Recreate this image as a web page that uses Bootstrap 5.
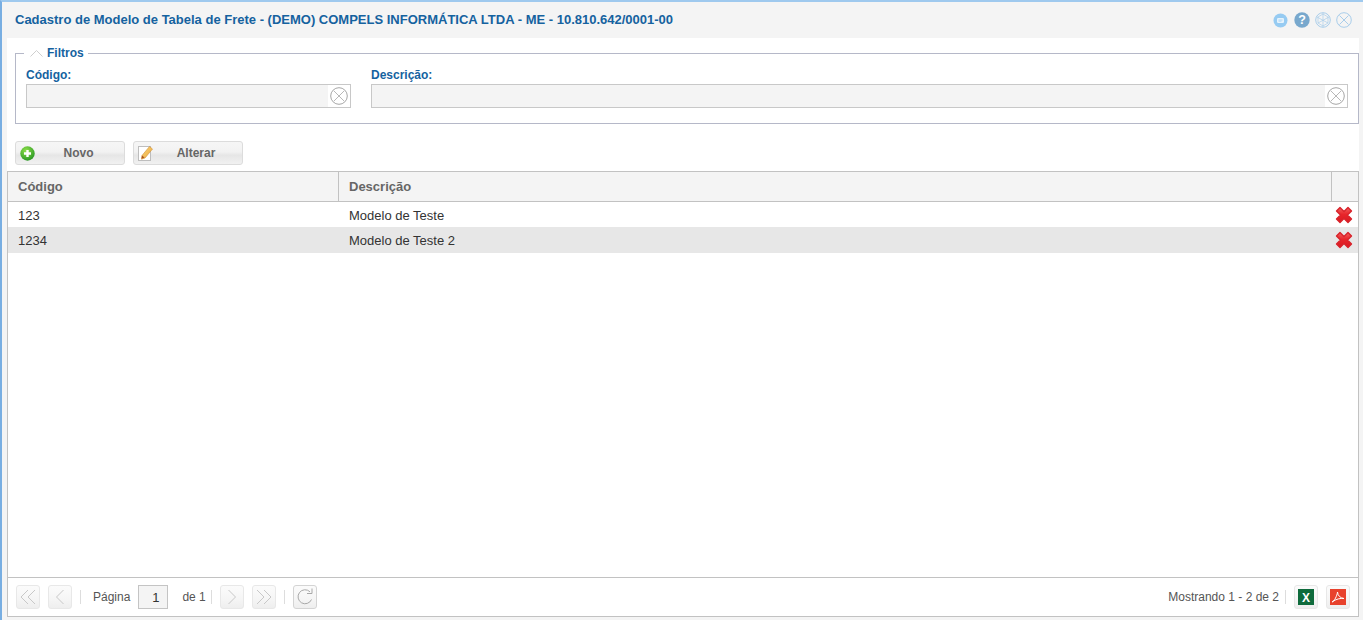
<!DOCTYPE html>
<html lang="pt-BR">
<head>
<meta charset="utf-8">
<title>Cadastro de Modelo de Tabela de Frete</title>
<link href="https://cdn.jsdelivr.net/npm/bootstrap@5.3.0/dist/css/bootstrap.min.css" rel="stylesheet">
<style>
html,body{height:100%;overflow:hidden}
body{font-family:"Liberation Sans",Arial,sans-serif;font-size:12px;color:#333;background:#f4f4f4}
.win{height:620px;background:#f4f4f4;border-top:2px solid #9fc9ee;border-left:2px solid #78aee2}
.win-head{height:36px;padding:0 11px 0 13px}
.win-title{font-size:13px;font-weight:700;color:#15629f;line-height:36px;margin:0;letter-spacing:0}
.win-body{margin-left:5px;margin-right:4px;background:#fff;height:579px}
.filter-box{margin:15px 0 0 8px;border:1px solid #b5b8c8;height:71px;padding:0 10px;position:relative}
.filter-leg{position:absolute;left:8px;top:-8px;background:#fff;padding:0 4px 0 6px;height:14px;line-height:14px;color:#15629f;font-weight:700;gap:4px}
.filter-row{padding-top:14px;gap:20px}
.f-cod{width:325px}
.f-desc{flex:1}
.f-lab{color:#15629f;font-weight:700;line-height:14px;height:16px}
.f-inp{height:24px;border:1px solid #c8c8c8;background:#f4f4f4}
.f-clear{width:22px;background:#fff;justify-content:center}
.tool-row{padding:17px 0 6px 8px;gap:8px}
.tool-btn{width:110px;height:24px;border:1px solid #dcdcdc;border-radius:3px;background:linear-gradient(#f6f6f6 0,#f2f2f2 45%,#e6e6e6 60%,#f1f1f1 100%);padding:0 0 0 4px;color:#666;font-weight:700;font-size:12px}
.tool-btn span{flex:1;text-align:center;padding-right:2px}
.tool-btn.alt span{padding-right:4px}
.grid-wrap{border:1px solid #c2c2c2;border-bottom:0;height:406px;background:#fff;overflow:hidden}
.grid-wrap table{table-layout:fixed;width:100%;margin:0;font-size:13px;color:#333;border-collapse:separate;border-spacing:0}
.grid-wrap th{height:30px;padding:0 10px;background:#f4f4f4;color:#666;font-weight:700;font-size:13px;border-bottom:1px solid #c2c2c2;border-right:1px solid #c2c2c2;vertical-align:middle;line-height:1}
.grid-wrap th:last-child{border-right:0}
.grid-wrap td{height:25px;padding:1px 10px 0;border:0;vertical-align:middle;line-height:1;background:transparent;box-shadow:none;color:#333}
.grid-wrap tr.sel td{background:#e7e7e7;height:26px;padding-bottom:1px}
.grid-wrap td.del{padding:0 5px 0 0;text-align:right}
.col-a{width:331px}.col-c{width:26px}
.pager{border:1px solid #c2c2c2;height:40px;background:#fff;padding:0 8px;color:#555}
.pg-btn{width:24px;height:24px;border:1px solid #e8e8e8;border-radius:3px;background:linear-gradient(#fbfbfb,#f6f6f6 55%,#eee);justify-content:center}
.pg-sep{width:1px;height:14px;background:#ddd}
.pg-inp{width:30px;height:24px;border:1px solid #c4c4c4;background:#f4f4f4;text-align:right;padding:2px 8px 0 0;font-size:13px;line-height:20px;color:#333}
.pg-de{margin-left:14px;margin-right:5px}
.pg-refresh{border-color:#d4d4d4}
.pg-total{margin-right:6px}
.head-icons{gap:5px}
.head-first{margin-right:1px}
svg{display:block}
</style>
</head>
<body>
<svg width="0" height="0" class="position-absolute"><defs>
<linearGradient id="rd" x1="0" y1="0" x2="0" y2="1"><stop offset="0" stop-color="#f0625f"/><stop offset=".45" stop-color="#e8262b"/><stop offset="1" stop-color="#d91a22"/></linearGradient>
<radialGradient id="gr" cx=".4" cy=".3" r=".8"><stop offset="0" stop-color="#8fe04a"/><stop offset="1" stop-color="#1d8f20"/></radialGradient>
<linearGradient id="pc" x1="0" y1="0" x2="1" y2="1"><stop offset="0" stop-color="#f8d777"/><stop offset="1" stop-color="#eda63c"/></linearGradient>
</defs></svg>
<div class="win">
  <div class="win-head d-flex align-items-center justify-content-between">
    <h1 class="win-title">Cadastro de Modelo de Tabela de Frete - (DEMO) COMPELS INFORMÁTICA LTDA - ME - 10.810.642/0001-00</h1>
    <div class="head-icons d-flex align-items-center">
      <svg class="head-first" width="15" height="15" viewBox="0 0 15 15"><circle cx="7.5" cy="7.5" r="7" fill="#96cbf2"/><rect x="4" y="5" width="7" height="5" rx="1.2" fill="#e6f3fc"/><path d="M5.500 7h4M5.500 8.200h3" stroke="#96cbf2" stroke-width=".6"/></svg>
      <svg width="16" height="16" viewBox="0 0 16 16"><circle cx="8" cy="8" r="7.700" fill="#78a8cd"/><text x="8" y="12.400" text-anchor="middle" font-family="Liberation Sans" font-weight="700" font-size="12.500" fill="#fff">?</text></svg>
      <svg width="16" height="16" viewBox="0 0 16 16" fill="none" stroke="#a9cdea"><circle cx="8" cy="8" r="7.300"/><path d="M8 1v14M2 5l11 6M14 5 3 11M8 2 3 5v6l5 3 5-3V5z" stroke-width=".7"/></svg>
      <svg width="16" height="16" viewBox="0 0 16 16" fill="none" stroke="#a9cdea"><circle cx="8" cy="8" r="7.300"/><path d="m3.500 3.500 9 9m0-9-9 9"/></svg>
    </div>
  </div>
  <div class="win-body d-flex flex-column">
    <div class="filter-box">
      <div class="filter-leg d-flex align-items-center">
        <svg width="13" height="7" viewBox="0 0 13 7" fill="none" stroke="#cfcfcf"><path d="m.5 6.500 6-6 6 6"/></svg>
        <span>Filtros</span>
      </div>
      <div class="filter-row d-flex">
        <div class="f-cod">
          <div class="f-lab">Código:</div>
          <div class="f-inp d-flex justify-content-end">
            <div class="f-clear d-flex align-items-center"><svg width="18" height="18" viewBox="0 0 18 18" fill="none" stroke="#a6a6a6"><circle cx="9" cy="9" r="8.300"/><path d="m4 4 10 10m0-10L4 14" stroke-width=".8"/></svg></div>
          </div>
        </div>
        <div class="f-desc">
          <div class="f-lab">Descrição:</div>
          <div class="f-inp d-flex justify-content-end">
            <div class="f-clear d-flex align-items-center"><svg width="18" height="18" viewBox="0 0 18 18" fill="none" stroke="#a6a6a6"><circle cx="9" cy="9" r="8.300"/><path d="m4 4 10 10m0-10L4 14" stroke-width=".8"/></svg></div>
          </div>
        </div>
      </div>
    </div>
    <div class="tool-row d-flex">
      <button type="button" class="tool-btn d-flex align-items-center">
        <svg width="15" height="15" viewBox="0 0 15 15"><circle cx="7.500" cy="7.500" r="7.200" fill="url(#gr)"/><path d="M7.500 4v7M4 7.500h7" stroke="#fff" stroke-width="2.400"/></svg>
        <span>Novo</span>
      </button>
      <button type="button" class="tool-btn alt d-flex align-items-center">
        <svg width="16" height="18" viewBox="0 0 16 18"><rect x=".5" y="2.500" width="12" height="14" fill="#fff" stroke="#bdbdbd"/><path d="m4 11.500 7.500-9 3 2.500-7.500 9-3.500 1.200z" fill="url(#pc)" stroke="#d0913a" stroke-width=".6"/><path d="m4 11.500-.5 3.200 3-1.200z" fill="#a9521f"/></svg>
        <span>Alterar</span>
      </button>
    </div>
    <div class="grid-wrap">
      <table class="table">
        <colgroup><col class="col-a"><col><col class="col-c"></colgroup>
        <thead><tr><th>Código</th><th>Descrição</th><th></th></tr></thead>
        <tbody>
          <tr><td>123</td><td>Modelo de Teste</td><td class="del"><svg class="ms-auto" width="18" height="18" viewBox="0 0 18 18"><path d="M1.500 5 5 1.500 9 5.500 13 1.500 16.500 5 12.500 9 16.500 13 13 16.500 9 12.500 5 16.500 1.500 13 5.500 9z" fill="url(#rd)" stroke="#d8222a" stroke-width="1.400" stroke-linejoin="round"/></svg></td></tr>
          <tr class="sel"><td>1234</td><td>Modelo de Teste 2</td><td class="del"><svg class="ms-auto" width="18" height="18" viewBox="0 0 18 18"><path d="M1.500 5 5 1.500 9 5.500 13 1.500 16.500 5 12.500 9 16.500 13 13 16.500 9 12.500 5 16.500 1.500 13 5.500 9z" fill="url(#rd)" stroke="#d8222a" stroke-width="1.400" stroke-linejoin="round"/></svg></td></tr>
        </tbody>
      </table>
    </div>
    <div class="pager d-flex align-items-center">
      <div class="pg-btn d-flex align-items-center"><svg width="16" height="16" viewBox="0 0 16 16" fill="none" stroke="#c8c8c8"><path d="M8 1 1 8l7 7M15 1 8 8l7 7"/></svg></div>
      <div class="pg-btn d-flex align-items-center ms-2"><svg width="10" height="16" viewBox="0 0 10 16" fill="none" stroke="#c8c8c8"><path d="M8.500 1 1.500 8l7 7"/></svg></div>
      <div class="pg-sep ms-2"></div>
      <span class="ms-2 ps-1">Página</span>
      <div class="pg-inp ms-2">1</div>
      <span class="pg-de">de 1</span>
      <div class="pg-sep"></div>
      <div class="pg-btn d-flex align-items-center ms-2"><svg width="10" height="16" viewBox="0 0 10 16" fill="none" stroke="#c8c8c8"><path d="m1.500 1 7 7-7 7"/></svg></div>
      <div class="pg-btn d-flex align-items-center ms-2"><svg width="16" height="16" viewBox="0 0 16 16" fill="none" stroke="#c8c8c8"><path d="m1 1 7 7-7 7M8 1l7 7-7 7"/></svg></div>
      <div class="pg-sep ms-2"></div>
      <div class="pg-btn pg-refresh d-flex align-items-center ms-2"><svg width="18" height="18" viewBox="0 0 18 18" fill="none" stroke="#a8a8a8"><path d="M15.500 11.500A7 7 0 1 1 14 3.800M11 5.500h5V.5" stroke-width="1"/></svg></div>
      <span class="pg-total ms-auto">Mostrando 1 - 2 de 2</span>
      <div class="pg-sep"></div>
      <div class="pg-btn d-flex align-items-center ms-2"><svg width="16" height="16" viewBox="0 0 16 16"><rect width="16" height="16" fill="#0f6b3c"/><text x="8" y="12.500" text-anchor="middle" font-family="Liberation Sans" font-weight="700" font-size="12" fill="#fff">X</text></svg></div>
      <div class="pg-btn d-flex align-items-center ms-2"><svg width="16" height="16" viewBox="0 0 16 16"><rect width="16" height="16" fill="#e8422d"/><path d="M2 13c2.500-1 5-6 5.500-10 .3 4 3 6 6.500 6.500-3.500-.5-8 .5-12 3.500z" fill="none" stroke="#fff" stroke-width="1"/></svg></div>
    </div>
  </div>
</div>
<script src="https://cdn.jsdelivr.net/npm/bootstrap@5.3.0/dist/js/bootstrap.bundle.min.js"></script>
</body>
</html>
